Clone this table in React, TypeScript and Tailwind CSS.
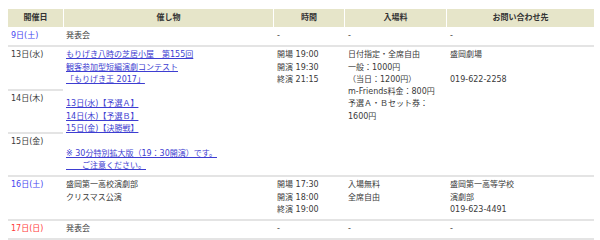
import React from "react";

const SEP = "border-b-2 border-[#e4e4e4]";
const LINK = "text-[#3d3dd1] underline decoration-[#3d3dd1]";

function Cell({ children, className = "" }: { children?: React.ReactNode; className?: string }) {
  return <div className={`pl-[3px] pt-[2px] pb-[3px] ${SEP} ${className}`}>{children}</div>;
}

function Lines({ items }: { items: React.ReactNode[] }) {
  return (
    <>
      {items.map((t, i) => (
        <div key={i} className="whitespace-pre">{t === "" ? "\u00a0" : t}</div>
      ))}
    </>
  );
}

export default function App() {
  return (
    <div className="bg-white w-[600px] h-[240px] overflow-hidden pt-[9px] pl-[8px] font-['DejaVu_Sans','Noto_Sans_CJK_JP',sans-serif] text-[8px] leading-[12.3px] text-[#3a3a3a]">
      <div className="grid grid-cols-[55px_210px_71px_102px_148px] w-[586px]">
        {/* header */}
        {["開催日", "催し物", "時間", "入場料", "お問い合わせ先"].map((h, i) => (
          <div
            key={h}
            className={`h-[18px] flex items-center justify-center bg-[#e6e5c9] font-bold text-[#333] ${i > 0 ? "border-l border-white" : ""}`}
          >
            {h}
          </div>
        ))}

        {/* 9日 */}
        <Cell className="pt-[3px] text-[#4646f0]">9日(土)</Cell>
        <Cell className="pt-[3px]">発表会</Cell>
        <Cell className="pt-[3px] pl-[4px]">-</Cell>
        <Cell className="pt-[3px] pl-[4px]">-</Cell>
        <Cell className="pt-[3px] pl-[4px]">-</Cell>

        {/* 13-15日 */}
        <Cell className="pt-[1px] col-start-1 row-start-3">13日(水)</Cell>
        <Cell className="pt-[1px] col-start-2 row-start-3 row-span-3">
          <div className="whitespace-pre">
            <span className={LINK}>
              {"もりげき八時の芝居小屋\u3000第155回"}
              <br />
              {"観客参加型短編演劇コンテスト"}
              <br />
              {"「もりげき王 2017」"}
            </span>
          </div>
          <div>{"\u00a0"}</div>
          <div><span className={LINK}>13日(水)【予選Ａ】</span></div>
          <div><span className={LINK}>14日(木)【予選Ｂ】</span></div>
          <div><span className={LINK}>15日(金)【決勝戦】</span></div>
          <div>{"\u00a0"}</div>
          <div className="whitespace-pre">
            <span className={LINK}>
              {"※ 30分特別拡大版（19：30開演）です。"}
              <br />
              {"\u3000\u3000ご注意ください。"}
            </span>
          </div>
        </Cell>
        <Cell className="pt-[1px] pl-[4px] col-start-3 row-start-3 row-span-3">
          <Lines items={["開場 19:00", "開演 19:30", "終演 21:15"]} />
        </Cell>
        <Cell className="pt-[1px] pl-[4px] col-start-4 row-start-3 row-span-3">
          <Lines
            items={[
              "日付指定・全席自由",
              "一般：1000円",
              "（当日：1200円）",
              "m-Friends料金：800円",
              "予選Ａ・Ｂセット券：",
              "1600円",
            ]}
          />
        </Cell>
        <Cell className="pt-[1px] pl-[4px] col-start-5 row-start-3 row-span-3">
          <Lines items={["盛岡劇場", "", "019-622-2258"]} />
        </Cell>
        <Cell className="pt-[1px] col-start-1 row-start-4">14日(木)</Cell>
        <Cell className="pt-[1px] col-start-1 row-start-5">15日(金)</Cell>

        {/* 16日 */}
        <Cell className="text-[#4646f0]">16日(土)</Cell>
        <Cell>
          <Lines items={["盛岡第一高校演劇部", "クリスマス公演"]} />
        </Cell>
        <Cell className="pl-[4px]">
          <Lines items={["開場 17:30", "開演 18:00", "終演 19:00"]} />
        </Cell>
        <Cell className="pl-[4px]">
          <Lines items={["入場無料", "全席自由"]} />
        </Cell>
        <Cell className="pl-[4px]">
          <Lines items={["盛岡第一高等学校", "演劇部", "019-623-4491"]} />
        </Cell>

        {/* 17日 */}
        <Cell className="text-[#ff3b3b]">17日(日)</Cell>
        <Cell>発表会</Cell>
        <Cell className="pl-[4px]">-</Cell>
        <Cell className="pl-[4px]">-</Cell>
        <Cell className="pl-[4px]">-</Cell>
      </div>
    </div>
  );
}
